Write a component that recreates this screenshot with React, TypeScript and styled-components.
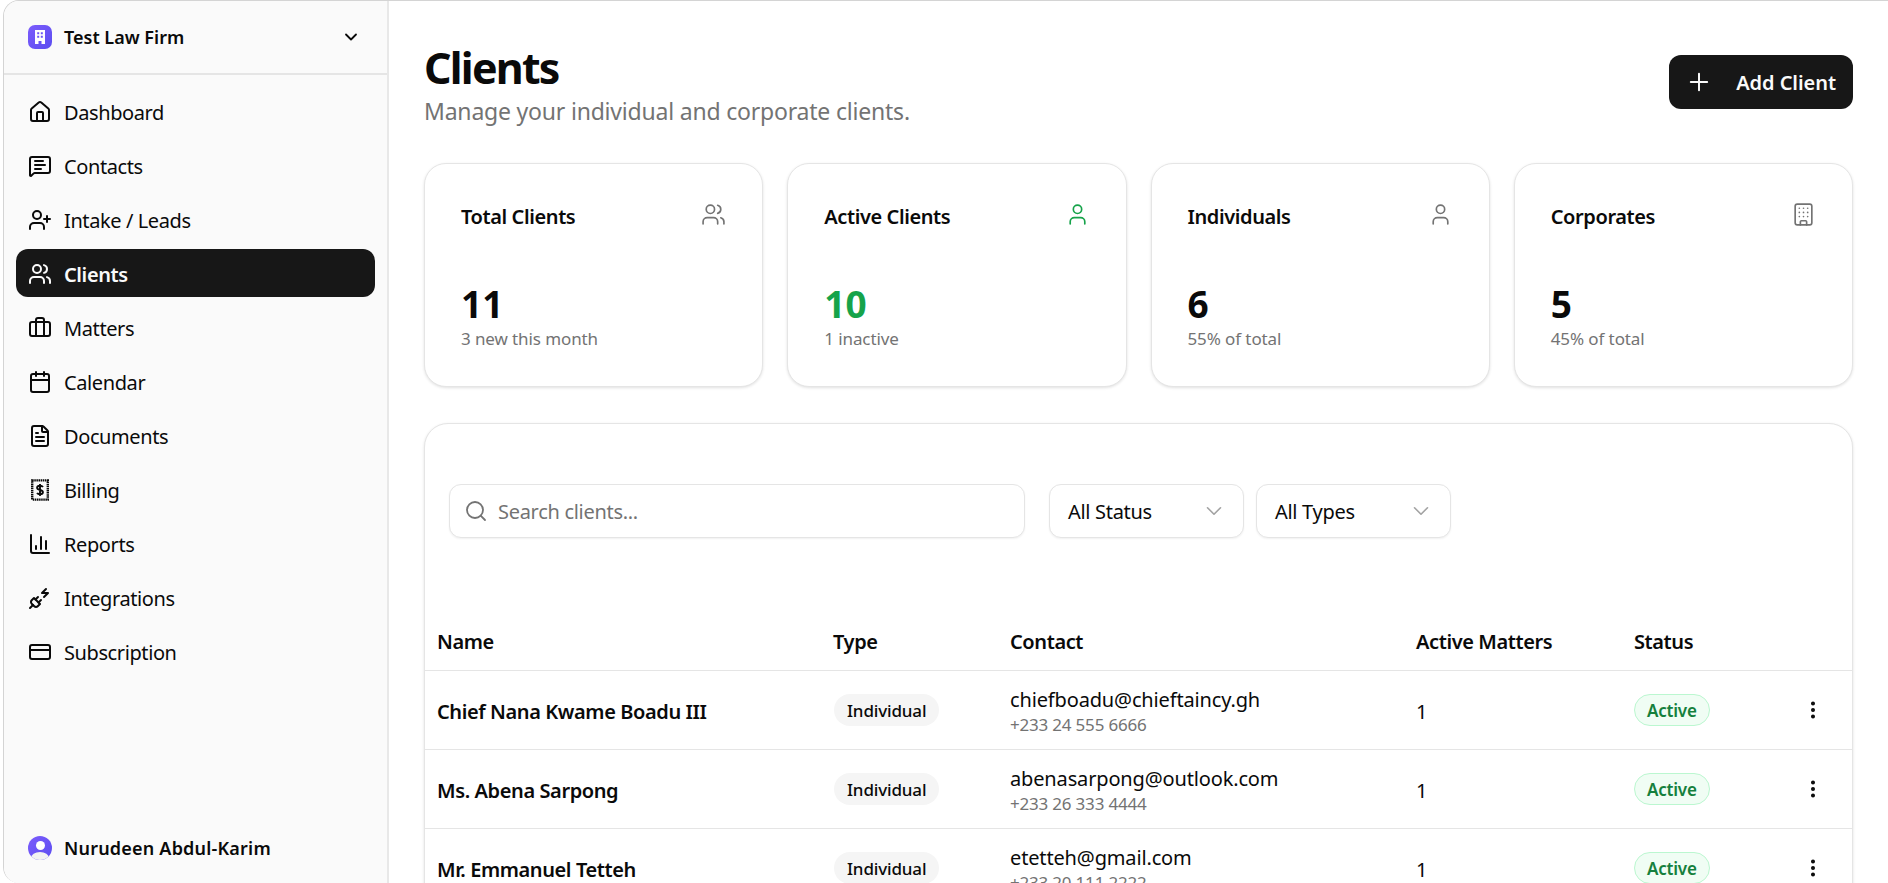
import styled, { createGlobalStyle } from "styled-components";
import {
	Briefcase,
	Building,
	Calendar,
	ChartColumn,
	ChevronDown,
	CreditCard,
	EllipsisVertical,
	FileText,
	House,
	MessageSquareText,
	PlugZap,
	Plus,
	Search,
	User,
	UserPlus,
	Users,
} from "lucide-react";

const GlobalStyle = createGlobalStyle`
	* {
		box-sizing: border-box;
	}
	html, body {
		margin: 0;
		height: 100%;
		overflow: hidden;
		background: #fff;
		font-family: "Noto Sans", sans-serif;
		color: #0a0a0a;
	}
`;

function BillingIcon() {
	return (
		<svg width="24" height="24" viewBox="0 0 24 24" fill="none" stroke="currentColor">
			<rect x="4.2" y="2.4" width="15.6" height="19.2" strokeWidth="2.4" strokeDasharray="1.5 0.6" />
			<path d="M15 9c-.6-.8-1.7-1.2-3-1.2-1.6 0-2.9.7-2.9 2s1.3 1.8 2.9 2.2 2.9 1 2.9 2.2-1.3 2-2.9 2c-1.3 0-2.4-.4-3-1.2M12 6v12" strokeWidth="1.9" />
		</svg>
	);
}

const navItems = [
	{ label: "Dashboard", icon: <House size={24} /> },
	{ label: "Contacts", icon: <MessageSquareText size={24} /> },
	{ label: "Intake / Leads", icon: <UserPlus size={24} /> },
	{ label: "Clients", icon: <Users size={24} />, active: true },
	{ label: "Matters", icon: <Briefcase size={24} /> },
	{ label: "Calendar", icon: <Calendar size={24} /> },
	{ label: "Documents", icon: <FileText size={24} /> },
	{ label: "Billing", icon: <BillingIcon /> },
	{ label: "Reports", icon: <ChartColumn size={24} /> },
	{ label: "Integrations", icon: <PlugZap size={24} /> },
	{ label: "Subscription", icon: <CreditCard size={24} /> },
];

const stats = [
	{ title: "Total Clients", value: "11", note: "3 new this month", icon: <Users size={25} /> },
	{ title: "Active Clients", value: "10", note: "1 inactive", icon: <User size={25} />, green: true },
	{ title: "Individuals", value: "6", note: "55% of total", icon: <User size={25} /> },
	{ title: "Corporates", value: "5", note: "45% of total", icon: <Building size={25} /> },
];

const clients = [
	{ name: "Chief Nana Kwame Boadu III", email: "chiefboadu@chieftaincy.gh", phone: "+233 24 555 6666" },
	{ name: "Ms. Abena Sarpong", email: "abenasarpong@outlook.com", phone: "+233 26 333 4444" },
	{ name: "Mr. Emmanuel Tetteh", email: "etetteh@gmail.com", phone: "+233 20 111 2222" },
];

export default function App() {
	return (
		<Shell>
			<GlobalStyle />
			<Sidebar>
				<OrgSwitcher>
					<OrgBadge>
						<svg width="16" height="16" viewBox="0 0 16 16" fill="#fff">
							<path d="M3 1h10v14H9.5v-3h-3v3H3zM5.2 3.2v2h2v-2zm3.6 0v2h2v-2zM5.2 6.8v2h2v-2zm3.6 0v2h2v-2z" fillRule="evenodd" />
						</svg>
					</OrgBadge>
					<OrgName>Test Law Firm</OrgName>
					<ChevronDown size={20} strokeWidth={2.2} />
				</OrgSwitcher>
				<Nav>
					{navItems.map((item) => (
						<NavItem key={item.label} $active={item.active}>
							{item.icon}
							{item.label}
						</NavItem>
					))}
				</Nav>
				<UserRow>
					<Avatar>
						<AvatarHead />
						<AvatarBody />
					</Avatar>
					<UserName>Nurudeen Abdul-Karim</UserName>
				</UserRow>
			</Sidebar>
			<Main>
				<PageHeader>
					<div>
						<Title>Clients</Title>
						<Subtitle>Manage your individual and corporate clients.</Subtitle>
					</div>
					<AddButton>
						<Plus size={28} strokeWidth={1.7} />
						Add Client
					</AddButton>
				</PageHeader>
				<StatGrid>
					{stats.map((stat) => (
						<StatCard key={stat.title}>
							<StatTop $green={stat.green}>
								<StatTitle>{stat.title}</StatTitle>
								{stat.icon}
							</StatTop>
							<StatValue $green={stat.green}>{stat.value}</StatValue>
							<StatNote>{stat.note}</StatNote>
						</StatCard>
					))}
				</StatGrid>
				<TableCard>
					<Filters>
						<SearchBox>
							<Search size={24} strokeWidth={1.8} />
							Search clients...
						</SearchBox>
						<Select>
							All Status
							<ChevronDown size={26} strokeWidth={1.5} />
						</Select>
						<Select>
							All Types
							<ChevronDown size={26} strokeWidth={1.5} />
						</Select>
					</Filters>
					<HeadRow>
						<span>Name</span>
						<span>Type</span>
						<span>Contact</span>
						<span>Active Matters</span>
						<span>Status</span>
					</HeadRow>
					{clients.map((client) => (
						<ClientRow key={client.email}>
							<ClientName>{client.name}</ClientName>
							<div>
								<TypeChip>Individual</TypeChip>
							</div>
							<Contact>
								<Email>{client.email}</Email>
								<Phone>{client.phone}</Phone>
							</Contact>
							<Count>1</Count>
							<div>
								<StatusChip>Active</StatusChip>
							</div>
							<RowMenu>
								<EllipsisVertical size={22} strokeWidth={2.4} />
							</RowMenu>
						</ClientRow>
					))}
				</TableCard>
			</Main>
		</Shell>
	);
}

const Shell = styled.div`
	display: flex;
	height: 883px;
	overflow: hidden;
	margin-left: 3px;
	border-top: 1px solid #d4d4d4;
	border-left: 1px solid #d4d4d4;
	border-top-left-radius: 16px;
	border-bottom-left-radius: 16px;
`;

const Sidebar = styled.aside`
	display: flex;
	flex-direction: column;
	flex: 0 0 385px;
	background: #fafafa;
	border-right: 2px solid #e8e8e8;
`;

const OrgSwitcher = styled.div`
	display: flex;
	align-items: center;
	gap: 12px;
	height: 74px;
	padding: 0 26px 0 24px;
	border-bottom: 2px solid #e5e5e5;
	color: #0a0a0a;
`;

const OrgBadge = styled.div`
	display: flex;
	align-items: center;
	justify-content: center;
	width: 24px;
	height: 24px;
	border-radius: 7px;
	background: linear-gradient(135deg, #7c5cfc, #5b4df0);
`;

const OrgName = styled.div`
	flex: 1;
	font-size: 18px;
	font-weight: 600;
`;

const Nav = styled.nav`
	display: flex;
	flex-direction: column;
	gap: 6px;
	padding: 12px 12px;
	flex: 1;
`;

const NavItem = styled.a<{ $active?: boolean }>`
	display: flex;
	align-items: center;
	gap: 12px;
	height: 48px;
	padding: 2px 11px 0 12px;
	border-radius: 12px;
	font-size: 20px;
	letter-spacing: -0.4px;
	font-weight: ${(p) => (p.$active ? 600 : 400)};
	background: ${(p) => (p.$active ? "#171717" : "transparent")};
	color: ${(p) => (p.$active ? "#fafafa" : "#0a0a0a")};

	& svg {
		flex: none;
		stroke-width: 2;
	}
`;

const UserRow = styled.div`
	display: flex;
	align-items: center;
	gap: 12px;
	padding: 0 24px 23px;
`;

const Avatar = styled.div`
	position: relative;
	width: 24px;
	height: 24px;
	border-radius: 50%;
	overflow: hidden;
	background: linear-gradient(135deg, #7c5cfc, #5b4df0);
`;

const AvatarHead = styled.div`
	position: absolute;
	left: 7.5px;
	top: 5px;
	width: 9px;
	height: 9px;
	border-radius: 50%;
	background: #fff;
`;

const AvatarBody = styled.div`
	position: absolute;
	left: 3px;
	top: 16px;
	width: 18px;
	height: 12px;
	border-radius: 50%;
	background: #f2f2f2;
`;

const UserName = styled.div`
	font-size: 18px;
	font-weight: 600;
	letter-spacing: 0.2px;
`;

const Main = styled.main`
	flex: 1;
	min-width: 0;
	padding: 39px 35px 0;
`;

const PageHeader = styled.header`
	display: flex;
	justify-content: space-between;
	align-items: flex-start;
`;

const Title = styled.h1`
	margin: 0;
	font-size: 43px;
	line-height: 56px;
	font-weight: 700;
	letter-spacing: -1.8px;
`;

const Subtitle = styled.p`
	margin: 0;
	font-size: 23px;
	line-height: 30px;
	letter-spacing: -0.2px;
	color: #737373;
`;

const AddButton = styled.button`
	display: flex;
	align-items: center;
	justify-content: space-between;
	width: 184px;
	height: 54px;
	margin-top: 15px;
	padding: 0 17px 0 16px;
	border: none;
	border-radius: 12px;
	background: #171717;
	color: #fafafa;
	font: 600 20px "Noto Sans", sans-serif;
	letter-spacing: -0.05px;
`;

const StatGrid = styled.section`
	display: grid;
	grid-template-columns: repeat(4, 1fr);
	gap: 24px;
	margin-top: 37px;
`;

const StatCard = styled.div`
	height: 224px;
	padding: 38px 36px 0;
	border: 1px solid #e5e5e5;
	border-radius: 22px;
	background: #fff;
	box-shadow: 0 1px 3px rgba(0, 0, 0, 0.12);
`;

const StatTop = styled.div<{ $green?: boolean }>`
	display: flex;
	justify-content: space-between;
	align-items: flex-start;
	height: 79px;

	& svg {
		color: ${(p) => (p.$green ? "#16a34a" : "#737373")};
		stroke-width: 1.6;
	}
`;

const StatTitle = styled.div`
	font-size: 20px;
	line-height: 30px;
	font-weight: 600;
	letter-spacing: -0.4px;
`;

const StatValue = styled.div<{ $green?: boolean }>`
	font-size: 37px;
	line-height: 46px;
	font-weight: 700;
	color: ${(p) => (p.$green ? "#16a34a" : "#0a0a0a")};
`;

const StatNote = styled.div`
	font-size: 17px;
	line-height: 24px;
	letter-spacing: -0.1px;
	color: #737373;
`;

const TableCard = styled.section`
	margin-top: 36px;
	border: 1px solid #e5e5e5;
	border-radius: 24px;
	background: #fff;
	box-shadow: 0 1px 3px rgba(0, 0, 0, 0.12);
`;

const Filters = styled.div`
	display: flex;
	gap: 12px;
	padding: 60px 24px 0;
`;

const fieldBox = `
	display: flex;
	align-items: center;
	height: 54px;
	border: 1px solid #e5e5e5;
	border-radius: 12px;
	background: #fff;
	box-shadow: 0 1px 2px rgba(0, 0, 0, 0.06);
	font-size: 20px;
	letter-spacing: -0.3px;

	& svg {
		flex: none;
	}
`;

const SearchBox = styled.div`
	${fieldBox}
	gap: 10px;
	width: 576px;
	margin-right: 12px;
	padding: 0 14px;
	color: #737373;
`;

const Select = styled.div`
	${fieldBox}
	justify-content: space-between;
	width: 195px;
	padding: 0 16px 0 18px;
	color: #0a0a0a;

	& svg {
		color: #a3a3a3;
	}
`;

const rowColumns = `
	display: grid;
	grid-template-columns: 396px 177px 406px 218px 168px 1fr;
	align-items: center;
	padding-left: 12px;
	border-bottom: 1px solid #e5e5e5;
`;

const HeadRow = styled.div`
	${rowColumns}
	height: 79px;
	margin-top: 54px;
	padding-top: 20px;
	font-size: 20px;
	font-weight: 600;
	letter-spacing: -0.4px;
`;

const ClientRow = styled.div`
	${rowColumns}
	height: 79px;
`;

const ClientName = styled.div`
	padding-top: 2px;
	font-size: 20px;
	font-weight: 600;
	letter-spacing: -0.4px;
`;

const TypeChip = styled.span`
	display: inline-flex;
	align-items: center;
	height: 32px;
	margin-left: 1px;
	padding: 0 13px;
	border-radius: 16px;
	background: #f5f5f5;
	font-size: 17px;
	font-weight: 500;
	letter-spacing: -0.15px;
`;

const Contact = styled.div`
	padding-top: 2px;
`;

const Email = styled.div`
	font-size: 20px;
	line-height: 27px;
	letter-spacing: -0.15px;
`;

const Phone = styled.div`
	font-size: 17px;
	line-height: 23px;
	letter-spacing: -0.2px;
	color: #737373;
`;

const Count = styled.div`
	padding-top: 2px;
	font-size: 20px;
`;

const StatusChip = styled.span`
	display: inline-flex;
	align-items: center;
	height: 32px;
	padding: 0 12px;
	border: 1px solid #bbf7d0;
	border-radius: 16px;
	background: #f0fdf4;
	color: #15803d;
	font-size: 17px;
	font-weight: 600;
	letter-spacing: -0.2px;
`;

const RowMenu = styled.div`
	display: flex;
	justify-content: flex-start;
	color: #0a0a0a;
`;
